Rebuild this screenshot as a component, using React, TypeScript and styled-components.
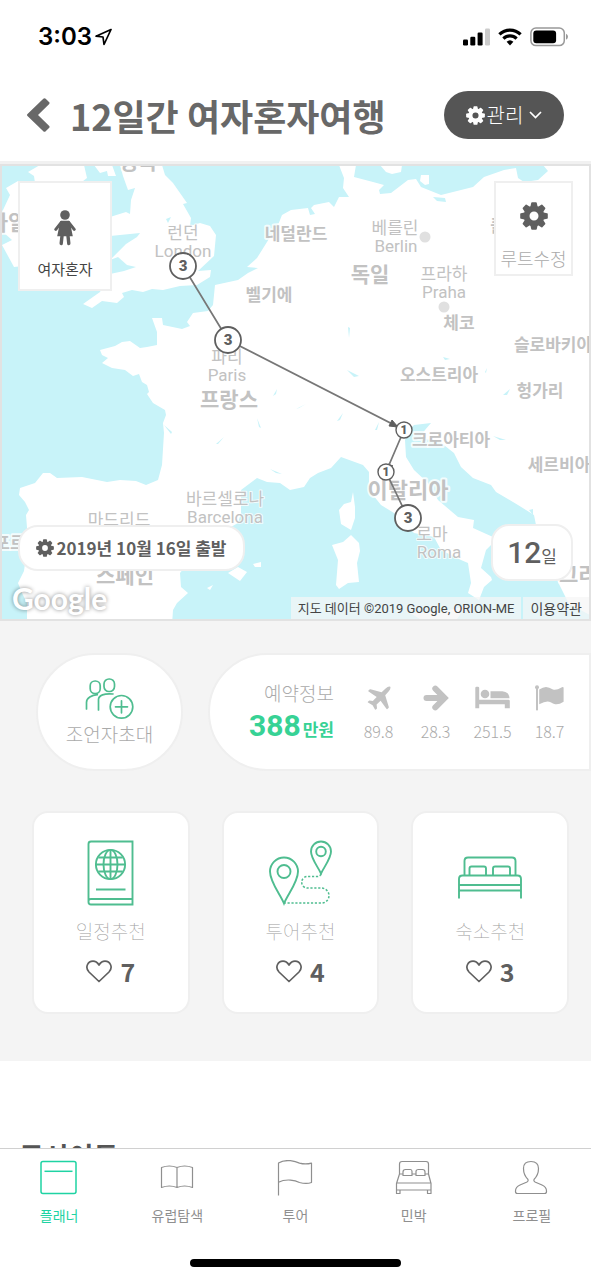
import React from "react";
import styled, { createGlobalStyle } from "styled-components";

const sans = `"Noto Sans CJK KR", "Noto Sans", sans-serif`;
const mapFont = `Roboto, "Noto Sans CJK KR", sans-serif`;

const color = {
  ink: "#5f5f5f",
  dark: "#555555",
  soft: "#c2c2c2",
  line: "#efefef",
  page: "#f4f4f4",
  mint: "#37d295",
  icon: "#4fbd90",
  active: "#1fd3a3",
  nav: "#8f8f8f",
  sea: "#c8f3f9",
};

const GlobalStyle = createGlobalStyle`
  * { box-sizing: border-box; }
  body { margin: 0; background: #fff; font-family: ${sans}; color: ${color.ink}; }
  button { font: inherit; color: inherit; border: 0; background: none; padding: 0; cursor: pointer; }
  a { color: inherit; text-decoration: none; }
  svg { display: block; flex: none; }
  h1, h2, p { margin: 0; }
`;

const Page = styled.div`
  display: flex;
  flex-direction: column;
  min-height: 100vh;
`;

const StatusBar = styled.div`
  display: flex;
  align-items: center;
  justify-content: space-between;
  height: 73px;
  padding: 0 22px 0 38px;
`;

const Clock = styled.div`
  display: flex;
  align-items: center;
  gap: 2px;
  font: 600 24px/32px Inter, sans-serif;
  color: #000;
`;

const StatusIcons = styled.div`
  display: flex;
  align-items: center;
  gap: 8px;
`;

const Header = styled.header`
  display: flex;
  align-items: center;
  height: 91px;
  padding: 0 27px 4px;
  border-bottom: 3px solid #f1f1f1;
`;

const BackButton = styled.button`
  display: flex;
  margin-right: 20px;
`;

const Title = styled.h1`
  flex: 1;
  font-size: 36px;
  line-height: 44px;
  font-weight: 700;
  color: #686868;
  white-space: nowrap;
`;

const ManageButton = styled.button`
  display: flex;
  align-items: center;
  justify-content: center;
  gap: 2px;
  width: 120px;
  height: 48px;
  border-radius: 24px;
  background: ${color.dark};
  color: #fff;
  font-size: 20px;
  line-height: 28px;
  font-weight: 300;

  svg:last-child { margin-left: 4px; }
`;

const MapFrame = styled.section`
  position: relative;
  aspect-ratio: 591 / 457;
  border: 2px solid #e2e2e2;
  overflow: hidden;
  background: ${color.sea};
`;

const MapCanvas = styled.svg`
  width: 100%;
  height: 100%;
  font-family: ${mapFont};
`;

const Corner = styled.div<{ $at: "topLeft" | "bottomLeft" }>`
  position: absolute;
  left: 16px;
  ${({ $at }) => ($at === "topLeft" ? "top: 15px;" : "bottom: 48px;")}
`;

const CornerRight = styled.div<{ $at: "top" | "bottom" }>`
  position: absolute;
  right: 16px;
  ${({ $at }) => ($at === "top" ? "top: 15px;" : "bottom: 38px;")}
`;

const TypeCard = styled.div`
  display: flex;
  flex-direction: column;
  align-items: center;
  justify-content: flex-end;
  gap: 12px;
  width: 94px;
  height: 110px;
  padding-bottom: 9px;
  background: #fff;
  border: 2px solid ${color.line};
  font-size: 15px;
  line-height: 22px;
  color: #444;
`;

const RouteButton = styled.button`
  display: flex;
  flex-direction: column;
  align-items: center;
  justify-content: flex-end;
  gap: 16px;
  width: 79px;
  height: 95px;
  padding-bottom: 4px;
  background: #fff;
  border: 2px solid ${color.line};
  font-size: 18px;
  line-height: 24px;
  font-weight: 300;
  color: #aaa;
  white-space: nowrap;
`;

const DatePill = styled.button`
  display: flex;
  align-items: center;
  justify-content: center;
  gap: 2px;
  width: 227px;
  height: 46px;
  background: #fff;
  border: 2px solid ${color.line};
  border-radius: 20px;
  font-size: 17px;
  line-height: 26px;
  font-weight: 700;
  white-space: nowrap;
`;

const DaysPill = styled.div`
  display: flex;
  align-items: baseline;
  justify-content: center;
  width: 82px;
  height: 57px;
  background: #fff;
  border: 2px solid ${color.line};
  border-radius: 18px;
  font: 500 30px/54px ${mapFont};

  small { font-size: 17px; font-weight: 400; }
`;

const GoogleMark = styled.div`
  position: absolute;
  left: 10px;
  bottom: 2px;
  font: 700 30px/38px Lato, sans-serif;
  color: #fff;
  text-shadow: 0 0 4px rgba(0, 0, 0, 0.45);
`;

const Credits = styled.div`
  position: absolute;
  right: 0;
  bottom: 0;
  display: flex;
  gap: 2px;
  font: 400 13px/20px ${mapFont};
  color: #444;
  white-space: nowrap;

  & > * {
    padding: 2px 7px 0;
    background: rgba(245, 245, 245, 0.72);
  }

  a { font-size: 14px; }
`;

const Panel = styled.main`
  display: flex;
  flex-direction: column;
  gap: 40px;
  padding: 32px 0 47px;
  background: ${color.page};
`;

const SummaryRow = styled.div`
  display: flex;
  gap: 25px;
  padding-left: 36px;
`;

const InviteButton = styled.button`
  display: flex;
  flex-direction: column;
  align-items: center;
  justify-content: center;
  width: 147px;
  height: 118px;
  background: #fff;
  border: 2px solid ${color.line};
  border-radius: 59px;
  font-size: 19px;
  line-height: 28px;
  font-weight: 300;
  color: #aaa;
`;

const Booking = styled.section`
  flex: 1;
  display: flex;
  align-items: center;
  justify-content: flex-end;
  height: 118px;
  padding-right: 11px;
  background: #fff;
  border: 2px solid ${color.line};
  border-radius: 59px 0 0 59px;
`;

const Total = styled.div`
  display: flex;
  flex-direction: column;
  align-items: flex-end;
  margin-right: 16px;
  padding-top: 2px;
  font-size: 19px;
  line-height: 28px;
  font-weight: 300;
  color: #aaa;
  white-space: nowrap;
`;

const Amount = styled.strong`
  font: 700 30px/38px Roboto, ${sans};
  color: ${color.mint};

  small { margin-left: 2px; font-family: ${sans}; font-size: 17px; }
`;

const Stat = styled.div`
  display: flex;
  flex-direction: column;
  align-items: center;
  gap: 8px;
  width: 57px;
  padding-top: 4px;
  font-size: 16px;
  line-height: 24px;
  font-weight: 300;
  color: #aaa;
`;

const StatIcon = styled.span`
  display: flex;
  align-items: center;
  height: 26px;
`;

const CardGrid = styled.div`
  display: grid;
  grid-template-columns: repeat(3, 1fr);
  gap: 32px;
  padding: 0 22px 0 32px;
`;

const Card = styled.article`
  display: flex;
  flex-direction: column;
  align-items: center;
  height: 203px;
  padding-top: 27px;
  background: #fff;
  border: 2px solid ${color.line};
  border-radius: 16px;
`;

const CardName = styled.h2`
  margin-top: 11px;
  font-size: 19px;
  line-height: 28px;
  font-weight: 100;
  color: #a0a0a0;
`;

const Likes = styled.button`
  display: flex;
  align-items: center;
  gap: 8px;
  margin-top: 10px;
  font-size: 25px;
  line-height: 32px;
  font-weight: 700;
`;

const Next = styled.section`
  padding: 75px 19px 0;

  h2 { font-size: 27px; line-height: 40px; font-weight: 700; color: #555; }
`;

const TabBar = styled.nav`
  position: fixed;
  left: 0;
  right: 0;
  bottom: 0;
  height: 132px;
  background: #fff;
  border-top: 1px solid #d0d0d0;
`;

const Tabs = styled.div`
  display: grid;
  grid-template-columns: repeat(5, 1fr);
  padding-top: 11px;
`;

const Tab = styled.a<{ $active?: boolean }>`
  display: flex;
  flex-direction: column;
  align-items: center;
  gap: 7px;
  font-size: 14px;
  line-height: 22px;
  color: ${({ $active }) => ($active ? color.active : color.nav)};
`;

const HomeIndicator = styled.div`
  width: 211px;
  height: 8px;
  margin: 33px auto 0;
  border-radius: 4px;
  background: #000;
`;

const Gear = ({ size, fill = "currentColor" }: { size: number; fill?: string }) => (
  <svg width={size} height={size} viewBox="0 0 28 28" aria-hidden="true">
    <circle cx="14" cy="14" r="7.4" fill="none" stroke={fill} strokeWidth="5.8" />
    {[0, 45, 90, 135, 180, 225, 270, 315].map((a) => (
      <path key={a} d="M10.2 5.500 11.200.9Q11.400.2 12 .2H16Q16.600.2 16.800.9L17.800 5.500Z" fill={fill} transform={`rotate(${a} 14 14)`} />
    ))}
  </svg>
);

const Location = () => (
  <svg width="18" height="18" viewBox="0 0 18 18" fill="none" stroke="#000" strokeWidth="1.7" strokeLinejoin="round">
    <path d="M17 1.500 2 8.200l7 .8 1 7.500Z" />
  </svg>
);

const Signal = () => (
  <svg width="27" height="18" viewBox="0 0 27 18">
    <rect x="0" y="11.5" width="5" height="6" rx="1.2" />
    <rect x="7.3" y="8.8" width="5" height="8.7" rx="1.2" />
    <rect x="14.6" y="4.5" width="5" height="13" rx="1.2" />
    <rect x="22" y="0.5" width="5" height="17" rx="1.2" fill="#ccc" />
  </svg>
);

const Wifi = () => (
  <svg width="24" height="18" viewBox="0 0 24 18" fill="none" stroke="#000" strokeWidth="3.2">
    <path d="M1.4 6.400a15.200 15.200 0 0 1 21.200 0" />
    <path d="M5.4 10.600a9.400 9.400 0 0 1 13.200 0" />
    <path d="m12 17.500-3.400-3.700a5 5 0 0 1 6.800 0Z" fill="#000" stroke="none" />
  </svg>
);

const Battery = () => (
  <svg width="39" height="20" viewBox="0 0 39 20">
    <rect x="0.9" y="1" width="33.4" height="17.6" rx="5" fill="#fff" stroke="#999" strokeWidth="1.5" />
    <rect x="3.3" y="3.4" width="22.8" height="12.8" rx="3" />
    <path d="M36 6.800v6q2-.9 2-3t-2-3Z" fill="#999" />
  </svg>
);

const Woman = () => (
  <svg width="22" height="36" viewBox="0 0 22 36" fill={color.ink} stroke={color.ink} strokeLinecap="round">
    <circle cx="11" cy="5" r="4.800" stroke="none" />
    <path d="M7.800 10.800h6.400q1.200 0 1.700 1l2.900 14.400H3.200l2.900-14.400q.5-1 1.700-1Z" stroke="none" />
    <path d="M7.300 12.400 1.800 19.400M14.700 12.400 20.200 19.400" strokeWidth="3" />
    <path d="M8 26 7.200 33.500M14 26 14.800 33.500" strokeWidth="3.400" />
  </svg>
);

const Invite = () => (
  <svg width="49" height="43" viewBox="0 0 49 43" fill="none" stroke={color.icon} strokeWidth="1.7" strokeLinecap="round">
    <rect x="5.200" y="4" width="10" height="12.500" rx="4.800" />
    <rect x="19" y="2" width="10.500" height="12.500" rx="5" />
    <path d="M1.500 32v-6.500q0-3.500 3.300-5.500t7.500-2.300M13.500 33V22.500q0-3 4-4.600t10.500-.9" />
    <circle cx="36.500" cy="29.800" r="11.300" />
    <path d="M36.500 23.800v12M30.500 29.800h12" />
  </svg>
);

const Plane = () => (
  <svg width="24" height="24" viewBox="0 0 24 24" fill={color.soft}>
    <path d="M23.300.8q.8 2-1.700 4.700L18.200 9.300 21.800 21q.2.600-.3 1L20.400 23q-.6.500-1-.2L13.600 14.800 9.600 18.600 10 22q0 .6-.4.900L8.800 23.600q-.5.300-.8-.2L5.600 19.200 1 16.600q-.5-.4-.1-.9L1.700 14.900q.3-.4.9-.3L5.800 15 9.700 10.900 1.600 5.600q-.6-.4-.1-1L2.500 3.600q.4-.4 1-.3L14.600 6.200 18.300 2.700Q21.600-.1 23.300.8Z" />
  </svg>
);

const Arrow = () => (
  <svg width="26" height="26" viewBox="0 0 26 26" fill="none" stroke={color.soft} strokeWidth="6">
    <path d="M3.500 13H20" strokeLinecap="round" />
    <path d="M12.300 3.600 21.600 13l-9.300 9.400" strokeLinecap="round" />
  </svg>
);

const Bed = () => (
  <svg width="35" height="24" viewBox="0 0 35 24" fill={color.soft}>
    <path d="M.3 2q0-1.300 1.300-1.300h1.300Q4.200.7 4.200 2v11.700h29.300q1.300 0 1.300 1.300v7.300h-5v-4.100H4.200v4.100H.3Z" />
    <circle cx="10" cy="8" r="4.300" />
    <path d="M15.500 5.300h11.800q7 .5 7.200 7H15.500Z" />
  </svg>
);

const FlagSolid = () => (
  <svg width="29" height="26" viewBox="0 0 29 26" fill={color.soft}>
    <circle cx="2" cy="2.200" r="2" />
    <rect x="1" y="2" width="2" height="23.500" rx=".8" />
    <path d="M4.200 4.500Q8 2 11 2t7 2.500q3 1.200 9-2.300 1.600-.6 1.600.7v13.800q-5 3.300-8.500 2.500-2-.5-4.500-2-3.800-2.200-11.400 2.100Z" />
  </svg>
);

const Heart = () => (
  <svg width="26" height="23" viewBox="0 0 26 23" fill="none" stroke={color.ink} strokeWidth="1.700" strokeLinejoin="round">
    <path d="M13 21.500 3 12C-1.500 7 2 1.200 7 1.200q3.500 0 6 3.800 2.500-3.800 6-3.800C24 1.200 27.500 7 23 12Z" />
  </svg>
);

const Passport = () => (
  <svg width="66" height="66" viewBox="0 0 66 66" fill="none" stroke={color.icon} strokeWidth="1.900">
    <path d="M54.500 1.500H13q-2.500 0-2.500 2.500v58q0 2.500 2.500 2.500h41.500ZM10.500 61q0-2 2.500-2h41.500" />
    <circle cx="32.500" cy="24.500" r="14.600" />
    <ellipse cx="32.500" cy="24.500" rx="7" ry="14.600" />
    <path d="M32.500 10v29M18 24.500h29M20.300 17.500h24.400M20.300 31.500h24.400M18 49.500h29.500" />
  </svg>
);

const RoutePins = () => (
  <svg width="66" height="66" viewBox="0 0 66 66" fill="none" stroke={color.icon} strokeWidth="1.900">
    <path d="M17 63.500C13 54 3 42 3 31.500a14 14 0 0 1 28 0C31 42 21 54 17 63.500Z" />
    <circle cx="17" cy="31.500" r="6.500" />
    <path d="M54 33.500C51 27 44 18.500 44 11.500a10 10 0 0 1 20 0C64 18.500 57 27 54 33.500Z" />
    <circle cx="54" cy="11.500" r="4.800" />
    <path d="M54 34q-1 2.500-4 2.500H40.500a5.800 5.800 0 0 0 0 11.600h14a7.500 7.500 0 0 1 0 15H17" strokeWidth="1.500" strokeDasharray="2.200 1.700" />
  </svg>
);

const BedOutline = () => (
  <svg width="66" height="66" viewBox="0 0 66 66" fill="none" stroke={color.icon} strokeWidth="1.900">
    <path d="M2 58.500V39q0-3.500 3.500-3.500h55Q64 35.500 64 39v19.500M2 45h62M2 50.500h62M7.500 35.500V21q0-3.500 3.500-3.500h44q3.500 0 3.500 3.500v14.500" />
    <path d="M12.500 35.500v-7q0-2 2-2H27q2 0 2 2v7M36 35.500v-7q0-2 2-2h13q2 0 2 2v7" />
  </svg>
);

const tabs = [
  {
    label: "플래너",
    icon: (
      <g>
        <rect x="1" y="1.500" width="35" height="32" rx="2" strokeWidth="1.500" />
        <path d="M4.500 11.300h28" strokeWidth="1.500" />
      </g>
    ),
  },
  {
    label: "유럽탐색",
    icon: <path d="M3.500 7.500q8-3 15.500 0 7.500-3 15.500 0v20q-8-3-15.500 0-7.500-3-15.500 0ZM19 7.500v20" />,
  },
  {
    label: "투어",
    icon: <path d="M2.500 35.500V3q5-3 12-2.300 5 .7 9 2.400 6 1.700 12 0v19.400q-5 1.800-12 0-4-1.900-9-2.400-7-.5-12 2.200" />,
  },
  {
    label: "민박",
    icon: (
      <path d="M4.500 14V4q0-2.500 2.500-2.500h24q2.500 0 2.500 2.500v10l2.500 9.500v10h-3.500v-3.500H5v3.500H1.500v-10L4.500 14H8M17 14h4M30 14h3.500M1.500 23H36M1.500 30H36M10.500 9.500h5q1.500 0 1.500 2v4H8v-3.500q0-2.500 2.500-2.500ZM23.500 9.500h4q2.500 0 2.500 2.500v3.500h-9v-4q0-2 2.500-2Z" />
    ),
  },
  {
    label: "프로필",
    icon: (
      <path d="M15 19.500q.7 1.500-1 2.500l-7 3q-4.500 2-4.500 6v.5q0 2 2 2h27q2 0 2-2V31q0-4-4.500-6l-7-3q-1.700-1-1-2.500 4.500-4.500 4.500-11 0-7-7.500-7t-7.500 7q0 6.500 4.500 11Z" />
    ),
  },
];

const land = [
  // mainland
  "M339 165 344 178 343 188 349 197 339 197 334 207 329 202 314 205 311 208 315 214 310 215 308 208 291 210 282 215 278 225 267 242 257 258 247 267 258 268 248 273 238 280 215 285 213 305 208 311 193 313 187 322 190 326 182 329 163 325 162 318 152 318 157 332 157 345 147 347 140 348 130 341 122 342 115 346 100 350 102 355 108 358 102 363 112 368 125 370 133 376 139 374 142 382 147 385 149 392 147 394 153 403 165 410 166 415 163 423 164 433 162 465 158 480 146 485 136 481 120 480 107 482 82 477 57 478 50 473 43 473 35 483 20 488 19 495 25 502 29 510 26 515 28 540 24 571 18 583 22 593 27 603 27 625H172L173 610 177 603 188 593 181 587 180 573 188 563 213 537 238 523 241 513V490L257 478 267 482 280 483 290 490 304 487 310 478 318 473 331 468 341 457 363 465 369 472V490L381 505 394 513 414 533 434 537 441 550 461 560 468 563 471 583 468 593 479 600 484 587 492 580 491 577 481 568 486 550 493 543 511 550 516 543 493 537 473 528 474 520 458 517 438 500 428 483 414 470 406 457 405 440 409 430 414 425 431 423 425 430 420 438 440 442 454 453 461 467 473 478 491 485 496 492 518 505 534 515 537 530 553 570 558 582 569 604 592 616V165H543L548 171 538 180 524 182 518 178 516 168 504 170 484 177 473 187 441 195 421 187 416 179 408 180 391 193 380 194 379 190 384 185 373 182 354 177 356 165Z",
  // Britain
  "M120 165 123 176 128 190 135 188 131 200 130 214 126 212 110 217V236L140 233 137 237 126 244 110 260 118 257 127 265 136 267 124 271 110 274 100 292 83 304 92 308 102 301 117 303 124 297 122 293 132 290 143 292 152 289 163 290 180 286 197 285 210 277 211 270 198 271 214 256 216 235 210 226 200 223 190 226 191 218 183 204 187 203 173 183 165 175 162 165Z",
  // Ireland
  "M28 172 40 165H84L87 178 78 185 90 200V250L60 262 14 267 2 245 12 240 3 232V210L10 195 6 188 18 181 35 183 34 176Z",
  "M94 165 100 173 107 171 108 176 116 176 112 165Z",
  // Danish islands
  "M380 165 386 172 392 174 401 172 402 165Z",
  "M421 175 429 175 429 184 425 185 420 181Z",
  // Corsica, Sardinia, Sicily, Balearics
  "M353 492 355 507 355 518 351 530 341 524 339 510 344 504 351 502Z",
  "M351 535 359 543 360 551 357 563 359 582 348 583 339 589 336 585 338 560 332 545 343 542Z",
  "M410 613 440 612 466 606 455 622 425 622Z",
  "M228 573 238 567 247 572 240 581Z",
  "M253 564 261 562 261 567 255 567Z",
  "M207 588 213 585 210 590Z",
];

const lakes = [
  "M433 197 445 198 446 202 437 201Z",
  "M348 327 350 328 349 338Z",
  "M443 357 450 359 445 360Z",
  "M347 370 359 376 354 377Z",
  "M485 372 487 368 486 373Z",
  "M503 395 510 389 507 395Z",
  "M164 425 172 432 171 434Z",
  "M257 418 261 428 259 427Z",
  "M216 444 224 437 218 444Z",
  "M270 469 282 474 276 473Z",
  "M273 396 277 389 276 394Z",
  "M296 409 306 404 299 408Z",
  "M337 421 343 413 340 420Z",
  "M375 430 379 422 377 430Z",
  "M493 436 506 440 500 440Z",
  "M166 219 171 217 168 223Z",
  "M529 510 533 509 533 515Z",
];

type Label = { x: number; y: number; text: string; size?: number; bold?: boolean };
const labels: Label[] = [
  { x: 138, y: 169, text: "영국", size: 21, bold: true },
  { x: 8, y: 230, text: "아일", size: 21, bold: true },
  { x: 183, y: 239, text: "런던" },
  { x: 183, y: 257, text: "London" },
  { x: 296, y: 240, text: "네덜란드", bold: true },
  { x: 269, y: 301, text: "벨기에", bold: true },
  { x: 395, y: 234, text: "베를린" },
  { x: 396, y: 252, text: "Berlin" },
  { x: 370, y: 282, text: "독일", size: 21, bold: true },
  { x: 444, y: 280, text: "프라하" },
  { x: 444, y: 298, text: "Praha" },
  { x: 459, y: 329, text: "체코", bold: true },
  { x: 553, y: 351, text: "슬로바키아", bold: true },
  { x: 439, y: 381, text: "오스트리아", bold: true },
  { x: 540, y: 397, text: "헝가리", bold: true },
  { x: 506, y: 232, text: "폴란", bold: true },
  { x: 227, y: 363, text: "파리" },
  { x: 227, y: 381, text: "Paris" },
  { x: 229, y: 407, text: "프랑스", size: 21, bold: true },
  { x: 451, y: 446, text: "크로아티아", bold: true },
  { x: 559, y: 471, text: "세르비아", bold: true },
  { x: 408, y: 498, text: "이탈리아", size: 22, bold: true },
  { x: 432, y: 540, text: "로마" },
  { x: 439, y: 558, text: "Roma" },
  { x: 225, y: 505, text: "바르셀로나" },
  { x: 225, y: 523, text: "Barcelona" },
  { x: 119, y: 526, text: "마드리드" },
  { x: 125, y: 583, text: "스페인", size: 21, bold: true },
  { x: 10, y: 549, text: "포르", bold: true },
  { x: 588, y: 582, text: "그리스", size: 21, bold: true },
];

const stops = [
  { x: 183, y: 266, r: 13, days: 3 },
  { x: 228, y: 340, r: 13, days: 3 },
  { x: 404, y: 430, r: 8, days: 1 },
  { x: 386, y: 472, r: 8, days: 1 },
  { x: 408, y: 518, r: 13, days: 3 },
];

const RouteMap = () => (
  <MapCanvas viewBox="2 166 587 453" preserveAspectRatio="xMidYMid slice" role="img" aria-label="여행 루트 지도">
    <g fill="#fff">{land.map((d) => <path key={d} d={d} />)}</g>
    <g fill={color.sea}>{lakes.map((d) => <path key={d} d={d} />)}</g>
    <g fill="#e0e0e0">
      <circle cx="425" cy="237" r="5.500" />
      <circle cx="444" cy="307" r="5.500" />
    </g>
    <g textAnchor="middle" fill={color.soft} stroke="#fff" strokeOpacity=".8" strokeLinejoin="round" paintOrder="stroke">
      {labels.map((l) => (
        <text key={l.text} x={l.x} y={l.y} fontSize={l.size ?? 17} fontWeight={l.bold ? 700 : 400} strokeWidth={l.bold ? 4 : 2}>
          {l.text}
        </text>
      ))}
    </g>
    <polyline points={stops.map((s) => `${s.x},${s.y}`).join(" ")} fill="none" stroke="#777" strokeWidth="1.700" />
    <path d="M398 427 389 426 392 420ZM388 464 387 467 393 466Z" fill={color.ink} stroke={color.ink} />
    {stops.map((s) => (
      <g key={`${s.x}-${s.y}`}>
        <circle cx={s.x} cy={s.y} r={s.r} fill="#fff" stroke={color.ink} strokeWidth={s.r > 10 ? 1.8 : 1.4} />
        <text x={s.x} y={s.y + (s.r > 10 ? 5 : 4)} textAnchor="middle" fontSize={s.r > 10 ? 15 : 12} fontWeight="900" fill={color.ink}>
          {s.days}
        </text>
      </g>
    ))}
  </MapCanvas>
);

const stats = [
  { name: "항공", icon: <Plane />, value: "89.8" },
  { name: "교통", icon: <Arrow />, value: "28.3" },
  { name: "숙소", icon: <Bed />, value: "251.5" },
  { name: "투어", icon: <FlagSolid />, value: "18.7" },
];

const cards = [
  { name: "일정추천", icon: <Passport />, likes: 7 },
  { name: "투어추천", icon: <RoutePins />, likes: 4 },
  { name: "숙소추천", icon: <BedOutline />, likes: 3 },
];

export default function App() {
  return (
    <Page>
      <GlobalStyle />
      <StatusBar>
        <Clock>
          3:03
          <Location />
        </Clock>
        <StatusIcons>
          <Signal />
          <Wifi />
          <Battery />
        </StatusIcons>
      </StatusBar>
      <Header>
        <BackButton aria-label="뒤로">
          <svg width="23" height="34" viewBox="0 0 23 34" fill="#686868">
            <path d="M.5 16 16.300.8q1.200-1.100 2.400 0l3.300 3.100q1.200 1.200 0 2.400L11 17l11 10.700q1.200 1.200 0 2.400l-3.300 3.100q-1.200 1.100-2.400 0L.5 18q-1-1 0-2Z" />
          </svg>
        </BackButton>
        <Title>12일간 여자혼자여행</Title>
        <ManageButton>
          <Gear size={19} />
          관리
          <svg width="13" height="8" viewBox="0 0 13 8" fill="none" stroke="#fff" strokeWidth="1.700">
            <path d="m1 1 5.500 5.500L12 1" />
          </svg>
        </ManageButton>
      </Header>

      <MapFrame>
        <RouteMap />
        <GoogleMark>Google</GoogleMark>
        <Credits>
          <span>지도 데이터 ©2019 Google, ORION-ME</span>
          <a href="#terms">이용약관</a>
        </Credits>
        <Corner $at="topLeft">
          <TypeCard>
            <Woman />
            여자혼자
          </TypeCard>
        </Corner>
        <CornerRight $at="top">
          <RouteButton>
            <Gear size={28} fill={color.ink} />
            루트수정
          </RouteButton>
        </CornerRight>
        <Corner $at="bottomLeft">
          <DatePill>
            <Gear size={18} />
            2019년 10월 16일 출발
          </DatePill>
        </Corner>
        <CornerRight $at="bottom">
          <DaysPill>
            12<small>일</small>
          </DaysPill>
        </CornerRight>
      </MapFrame>

      <Panel>
        <SummaryRow>
          <InviteButton>
            <Invite />
            조언자초대
          </InviteButton>
          <Booking>
            <Total>
              예약정보
              <Amount>
                388<small>만원</small>
              </Amount>
            </Total>
            {stats.map((s) => (
              <Stat key={s.name} title={s.name}>
                <StatIcon>{s.icon}</StatIcon>
                {s.value}
              </Stat>
            ))}
          </Booking>
        </SummaryRow>
        <CardGrid>
          {cards.map((c) => (
            <Card key={c.name}>
              {c.icon}
              <CardName>{c.name}</CardName>
              <Likes aria-label={`좋아요 ${c.likes}`}>
                <Heart />
                {c.likes}
              </Likes>
            </Card>
          ))}
        </CardGrid>
      </Panel>

      <Next>
        <h2>도시이동</h2>
      </Next>

      <TabBar>
        <Tabs>
          {tabs.map((t, i) => (
            <Tab key={t.label} href="#" $active={i === 0}>
              <svg width="38" height="37" viewBox="0 0 38 37" fill="none" stroke="currentColor" strokeWidth="1.200" strokeLinejoin="round">
                {t.icon}
              </svg>
              {t.label}
            </Tab>
          ))}
        </Tabs>
        <HomeIndicator />
      </TabBar>
    </Page>
  );
}
